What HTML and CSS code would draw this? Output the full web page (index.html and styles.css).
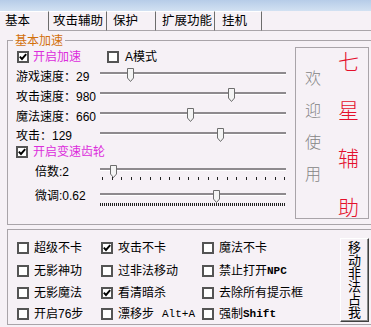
FILE: index.html
```html
<!DOCTYPE html>
<html lang="zh">
<head>
  <meta charset="UTF-8" />
  <title>七星辅助</title>
  <link rel="stylesheet" href="styles.css">
</head>
<body>
  <div class="titleband"></div>

  <div class="tabs">
    <div class="tab active">基本</div>
    <div class="tab">攻击辅助</div>
    <div class="tab">保护</div>
    <div class="tab">扩展功能</div>
    <div class="tab">挂机</div>
    <div class="tab-rest"></div>
  </div>

  <fieldset class="group speed">
    <legend>基本加速</legend>
    <div class="speed-body">
      <div class="controls">
        <div class="row cb-row">
          <label class="check accel">
            <span class="box"><svg width="8" height="8" viewBox="0 0 8 8"><path d="M0.8 3.6L3 6L7.2 1.2" fill="none" stroke="#000" stroke-width="1.9"/></svg></span>
            <span class="magenta">开启加速</span>
          </label>
          <label class="check amode"><span class="box"></span>A模式</label>
        </div>

        <div class="row">
          <span class="label">游戏速度：29</span>
          <div class="slider">
            <div class="track"></div>
            <svg class="thumb" style="left:27px" width="7" height="14" viewBox="0 0 7 14"><path d="M0.5 0.5H6.5V10L3.5 13.5L0.5 10Z" fill="#f4f4f4" stroke="#6e6e6e"/></svg>
          </div>
        </div>

        <div class="row">
          <span class="label">攻击速度：980</span>
          <div class="slider">
            <div class="track"></div>
            <svg class="thumb" style="left:128px" width="7" height="14" viewBox="0 0 7 14"><path d="M0.5 0.5H6.5V10L3.5 13.5L0.5 10Z" fill="#f4f4f4" stroke="#6e6e6e"/></svg>
          </div>
        </div>

        <div class="row">
          <span class="label">魔法速度：660</span>
          <div class="slider">
            <div class="track"></div>
            <svg class="thumb" style="left:87px" width="7" height="14" viewBox="0 0 7 14"><path d="M0.5 0.5H6.5V10L3.5 13.5L0.5 10Z" fill="#f4f4f4" stroke="#6e6e6e"/></svg>
          </div>
        </div>

        <div class="row short">
          <span class="label">攻击：129</span>
          <div class="slider">
            <div class="track"></div>
            <svg class="thumb" style="left:117px" width="7" height="14" viewBox="0 0 7 14"><path d="M0.5 0.5H6.5V10L3.5 13.5L0.5 10Z" fill="#f4f4f4" stroke="#6e6e6e"/></svg>
          </div>
        </div>

        <div class="row cb-row2">
          <label class="check">
            <span class="box"><svg width="8" height="8" viewBox="0 0 8 8"><path d="M0.8 3.6L3 6L7.2 1.2" fill="none" stroke="#000" stroke-width="1.9"/></svg></span>
            <span class="magenta">开启变速齿轮</span>
          </label>
        </div>

        <div class="row gear">
          <span class="label sub">倍数:2</span>
          <div class="slider">
            <div class="track"></div>
            <svg class="thumb" style="left:10px" width="7" height="13" viewBox="0 0 7 13"><path d="M0.5 0.5H6.5V9L3.5 12.5L0.5 9Z" fill="#f4f4f4" stroke="#6e6e6e"/></svg>
            <div class="ticks"></div>
          </div>
        </div>

        <div class="row gear fine">
          <span class="label sub">微调:0.62</span>
          <div class="slider">
            <div class="track"></div>
            <svg class="thumb" style="left:113px" width="7" height="13" viewBox="0 0 7 13"><path d="M0.5 0.5H6.5V9L3.5 12.5L0.5 9Z" fill="#f4f4f4" stroke="#6e6e6e"/></svg>
            <div class="ticks dense"></div>
          </div>
        </div>
      </div>

      <div class="welcome">
        <div class="greet">
          <span>欢</span><span>迎</span><span>使</span><span>用</span>
        </div>
        <div class="brand">
          <span>七</span><span>星</span><span>辅</span><span>助</span>
        </div>
      </div>
    </div>
  </fieldset>

  <fieldset class="group options">
    <div class="opt-grid">
      <label class="check"><span class="box"></span>超级不卡</label>
      <label class="check"><span class="box"><svg width="8" height="8" viewBox="0 0 8 8"><path d="M0.8 3.6L3 6L7.2 1.2" fill="none" stroke="#000" stroke-width="1.9"/></svg></span>攻击不卡</label>
      <label class="check"><span class="box"></span>魔法不卡</label>

      <label class="check"><span class="box"></span>无影神功</label>
      <label class="check"><span class="box"></span>过非法移动</label>
      <label class="check"><span class="box"></span>禁止打开<span class="mono">NPC</span></label>

      <label class="check"><span class="box"></span>无影魔法</label>
      <label class="check"><span class="box"><svg width="8" height="8" viewBox="0 0 8 8"><path d="M0.8 3.6L3 6L7.2 1.2" fill="none" stroke="#000" stroke-width="1.9"/></svg></span>看清暗杀</label>
      <label class="check"><span class="box"></span>去除所有提示框</label>

      <label class="check"><span class="box"></span>开启76步</label>
      <label class="check"><span class="box"></span>漂移步<span class="mono key">Alt+A</span></label>
      <label class="check"><span class="box"></span>强制<span class="mono">Shift</span></label>
    </div>
    <button class="side-btn">移动非法占我</button>
  </fieldset>
</body>
</html>
```

FILE: styles.css
```css
* {
  box-sizing: border-box;
}

body {
  margin: 0;
  width: 371px;
  height: 327px;
  overflow: hidden;
  background-color: #f6f1f6;
  color: #000;
  font-family: "Liberation Sans", "Noto Sans CJK SC", sans-serif;
  font-size: 12px;
  line-height: 14px;
}

.titleband {
  height: 11px;
  background: linear-gradient(#b6cce8, #d2e1f2);
}

/* tab strip */
.tabs {
  display: flex;
  height: 20px;
}

.tab {
  height: 20px;
  padding-top: 2px;
  font-size: 12.5px;
  border-top: 1px solid #fff;
  border-right: 1px solid #6c6c6c;
  border-bottom: 1px solid #aaa5aa;
  white-space: nowrap;
}

.tab.active {
  border-bottom-color: transparent;
}

.tab:nth-child(1) { width: 49px; padding-left: 5px; }
.tab:nth-child(2) { width: 58px; padding-left: 4px; }
.tab:nth-child(3) { width: 49px; padding-left: 6px; }
.tab:nth-child(4) { width: 59px; padding-left: 6px; }
.tab:nth-child(5) { width: 47px; padding-left: 7px; }

.tab-rest {
  flex: 1;
  border-bottom: 1px solid #aaa5aa;
}

/* group boxes */
.group {
  margin: 0 0 0 7px;
  padding: 0;
  width: 367px;
  min-width: 0;
  border: 1px solid #a9a4a9;
}

.group legend {
  margin-left: 5px;
  padding: 0 2px;
  color: #d2700c;
  font-family: "Noto Sans CJK SC", sans-serif;
  font-size: 12px;
  line-height: 14px;
}

.speed {
  margin-top: 2px;
}

.speed-body {
  display: flex;
  height: 177px;
}

.controls {
  flex: 1;
  padding-left: 8px;
}

.row {
  display: flex;
  align-items: center;
  height: 20px;
}

.row.short {
  height: 18px;
}

.label {
  width: 84px;
  white-space: nowrap;
}

.label.sub {
  width: 65px;
  margin-left: 19px;
}

.check {
  display: flex;
  align-items: center;
  gap: 5px;
  white-space: nowrap;
}

.box {
  display: flex;
  align-items: center;
  justify-content: center;
  width: 12px;
  height: 12px;
  border: 2px solid #545454;
  background-color: #fff;
  flex: none;
}

.magenta {
  color: #dc2ddc;
}

.cb-row .accel {
  margin-left: 1px;
  gap: 4px;
}

.cb-row .amode {
  margin-left: 26px;
  gap: 6px;
}

.cb-row2 {
  height: 14px;
}

/* sliders */
.slider {
  position: relative;
  align-self: flex-start;
  width: 186px;
}

.track {
  margin-top: 5px;
  height: 3px;
  border-top: 2px solid #8e8a8e;
  border-bottom: 1px solid #fff;
}

.thumb {
  position: absolute;
  top: 1px;
}

.row.gear {
  align-items: flex-start;
  height: 24px;
}

.row.gear .label {
  padding-top: 6px;
}

.row.gear .track {
  margin-top: 9px;
}

.row.gear .thumb {
  top: 6px;
}

.row.fine {
  height: 27px;
}

.row.fine .track {
  margin-top: 10px;
}

.row.fine .thumb {
  top: 7px;
}

.ticks {
  margin: 6px 0 0 2px;
  width: 184px;
  height: 3px;
  background: repeating-linear-gradient(to right, #222 0 1px, transparent 1px 9.6px);
}

.ticks.dense {
  margin-top: 7px;
  margin-left: 0;
  width: 186px;
  background: repeating-linear-gradient(to right, #222 0 1px, transparent 1px 2px);
}

/* welcome panel */
.welcome {
  display: flex;
  width: 74px;
  height: 172px;
  margin-right: 4px;
  border: 1px solid #a9a4a9;
  font-family: "Noto Sans CJK SC", sans-serif;
}

.greet {
  display: flex;
  flex-direction: column;
  justify-content: space-between;
  width: 35px;
  padding: 20px 0 36px 9px;
  color: #858585;
  font-size: 16px;
  font-weight: 300;
  line-height: 18px;
}

.brand {
  display: flex;
  flex-direction: column;
  justify-content: space-between;
  padding: 2px 0 2px 7px;
  color: #e4102c;
  font-size: 21px;
  font-weight: 300;
  line-height: 20px;
}

/* options group */
.options {
  display: flex;
  margin-top: 4px;
  height: 96px;
}

.opt-grid {
  display: grid;
  grid-template-columns: 84px 101px 138px;
  grid-template-rows: 22px 23px 22px 20px;
  padding: 7px 0 0 9px;
}

.mono {
  font-family: "Liberation Mono", monospace;
  font-size: 11px;
  font-weight: bold;
  margin-left: -5px;
}

.key {
  margin-left: 3px;
  font-weight: normal;
}

.side-btn {
  width: 29px;
  height: 84px;
  margin-top: 8px;
  padding: 0;
  background-color: #f6f1f6;
  border: 1px solid;
  border-color: #fff #404040 #404040 #fff;
  box-shadow: inset -1px -1px 0 #8a8a8a;
  font-family: "Noto Sans CJK SC", sans-serif;
  font-size: 13px;
  line-height: 13px;
  writing-mode: vertical-rl;
  color: #000;
}
```
